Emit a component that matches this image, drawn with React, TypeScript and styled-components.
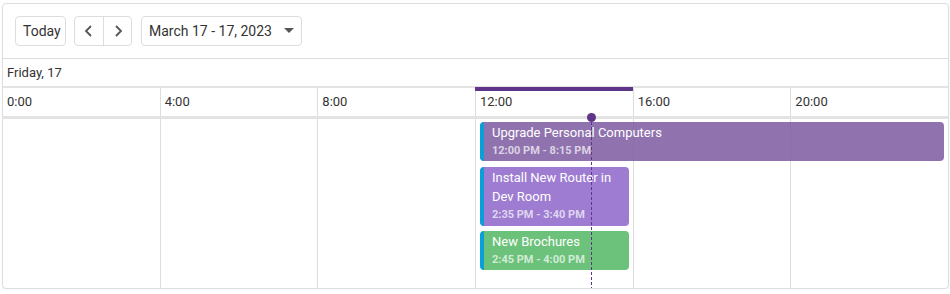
import styled, { createGlobalStyle } from "styled-components";

const GlobalStyle = createGlobalStyle`
  body {
    margin: 0;
    background: #fff;
    font-family: Roboto, "Liberation Sans", Arial, sans-serif;
    color: #333;
  }
`;

const Scheduler = styled.div`
  box-sizing: border-box;
  margin: 3px 0 0 2px;
  width: 947px;
  height: 286px;
  border: 1px solid #ddd;
  border-radius: 4px;
  box-shadow: 0 1px 1px rgba(0, 0, 0, 0.08);
  display: flex;
  flex-direction: column;
`;

const Toolbar = styled.div`
  box-sizing: border-box;
  height: 55px;
  padding: 12px 12px 0;
  border-bottom: 1px solid #ddd;
  display: flex;
  gap: 8px;
`;

const Button = styled.button<{ $width: number }>`
  box-sizing: border-box;
  width: ${(p) => p.$width}px;
  height: 30px;
  padding: 0 7px;
  border: 1px solid #ddd;
  border-radius: 4px;
  background: #fff;
  font-family: inherit;
  font-size: 14px;
  color: #333;
  display: flex;
  align-items: center;
  justify-content: space-between;
`;

const NavGroup = styled.div`
  box-sizing: border-box;
  height: 30px;
  width: 58px;
  border: 1px solid #ddd;
  border-radius: 4px;
  display: grid;
  grid-template-columns: 1fr 1fr;
`;

const NavButton = styled.div`
  display: flex;
  align-items: center;
  justify-content: center;
  & + & {
    border-left: 1px solid #ddd;
  }
`;

const DateRow = styled.div`
  height: 27px;
  padding-left: 4px;
  border-bottom: 2px solid #e3e3e3;
  font-size: 13px;
  display: flex;
  align-items: center;
`;

const TimeRow = styled.div`
  height: 28px;
  border-bottom: 3px solid #e3e3e3;
  display: grid;
  grid-template-columns: repeat(6, 1fr);
  margin-left: -1px;
`;

const TimeCell = styled.div<{ $current?: boolean }>`
  position: relative;
  padding: 6px 0 0 4px;
  font-size: 13px;
  border-left: 1px solid #ddd;
  &:first-child {
    border-left-color: transparent;
  }
  &::before {
    content: "";
    display: ${(p) => (p.$current ? "block" : "none")};
    position: absolute;
    left: -1px;
    right: 0;
    top: -1px;
    height: 4px;
    background: #5f3589;
  }
`;

const Content = styled.div`
  flex: 1;
  position: relative;
  display: grid;
  grid-template-columns: repeat(6, 1fr);
  margin-left: -1px;
`;

const Column = styled.div`
  border-left: 1px solid #ddd;
  &:first-child {
    border-left-color: transparent;
  }
`;

const Appointment = styled.div<{ $color: string }>`
  position: absolute;
  box-sizing: border-box;
  padding: 1px 6px 0 12px;
  border-radius: 4px;
  background: ${(p) => p.$color};
  color: #fff;
  overflow: hidden;
  &::before {
    content: "";
    position: absolute;
    left: 0;
    top: 0;
    bottom: 0;
    width: 4px;
    border-radius: 4px 0 0 4px;
    background: #0a9fd9;
  }
`;

const Title = styled.div`
  font-size: 13px;
  line-height: 19px;
`;

const Time = styled.div`
  font-size: 11px;
  font-weight: bold;
  line-height: 18px;
  color: rgba(255, 255, 255, 0.7);
`;

const NowLine = styled.div`
  position: absolute;
  top: -2px;
  bottom: 0;
  width: 1px;
  background: repeating-linear-gradient(
    to bottom,
    #5f3589 0 3px,
    transparent 3px 5px
  );
  &::before {
    content: "";
    position: absolute;
    left: -4px;
    top: -4px;
    width: 9px;
    height: 9px;
    border-radius: 50%;
    background: #5f3589;
  }
`;

const Chevron = ({ dir }: { dir: "left" | "right" }) => (
  <svg width="10" height="14" viewBox="0 0 10 14">
    <polyline
      points={dir === "left" ? "7,2 2,7 7,12" : "3,2 8,7 3,12"}
      fill="none"
      stroke="#555"
      strokeWidth="1.8"
    />
  </svg>
);

const Caret = () => (
  <svg width="10" height="6" viewBox="0 0 10 6">
    <polygon points="0,0 10,0 5,5" fill="#555" />
  </svg>
);

const hours = ["0:00", "4:00", "8:00", "12:00", "16:00", "20:00"];

const appointments = [
  {
    title: "Upgrade Personal Computers",
    time: "12:00 PM - 8:15 PM",
    color: "rgba(125, 90, 160, 0.85)",
    left: 478,
    top: 3,
    width: 464,
    height: 39,
  },
  {
    title: "Install New Router in Dev Room",
    time: "2:35 PM - 3:40 PM",
    color: "rgba(146, 110, 205, 0.9)",
    left: 478,
    top: 48,
    width: 149,
    height: 59,
  },
  {
    title: "New Brochures",
    time: "2:45 PM - 4:00 PM",
    color: "rgba(92, 187, 108, 0.9)",
    left: 478,
    top: 112,
    width: 149,
    height: 39,
  },
];

export default function App() {
  return (
    <>
      <GlobalStyle />
      <Scheduler>
        <Toolbar>
          <Button $width={51}>Today</Button>
          <NavGroup>
            <NavButton>
              <Chevron dir="left" />
            </NavButton>
            <NavButton>
              <Chevron dir="right" />
            </NavButton>
          </NavGroup>
          <Button $width={161} style={{ marginLeft: 1 }}>
            March 17 - 17, 2023
            <Caret />
          </Button>
        </Toolbar>
        <DateRow>Friday, 17</DateRow>
        <TimeRow>
          {hours.map((h) => (
            <TimeCell key={h} $current={h === "12:00"}>
              {h}
            </TimeCell>
          ))}
        </TimeRow>
        <Content>
          {hours.map((h) => (
            <Column key={h} />
          ))}
          {appointments.map((a) => (
            <Appointment
              key={a.title}
              $color={a.color}
              style={{ left: a.left, top: a.top, width: a.width, height: a.height }}
            >
              <Title>{a.title}</Title>
              <Time>{a.time}</Time>
            </Appointment>
          ))}
          <NowLine style={{ left: 589 }} />
        </Content>
      </Scheduler>
    </>
  );
}
